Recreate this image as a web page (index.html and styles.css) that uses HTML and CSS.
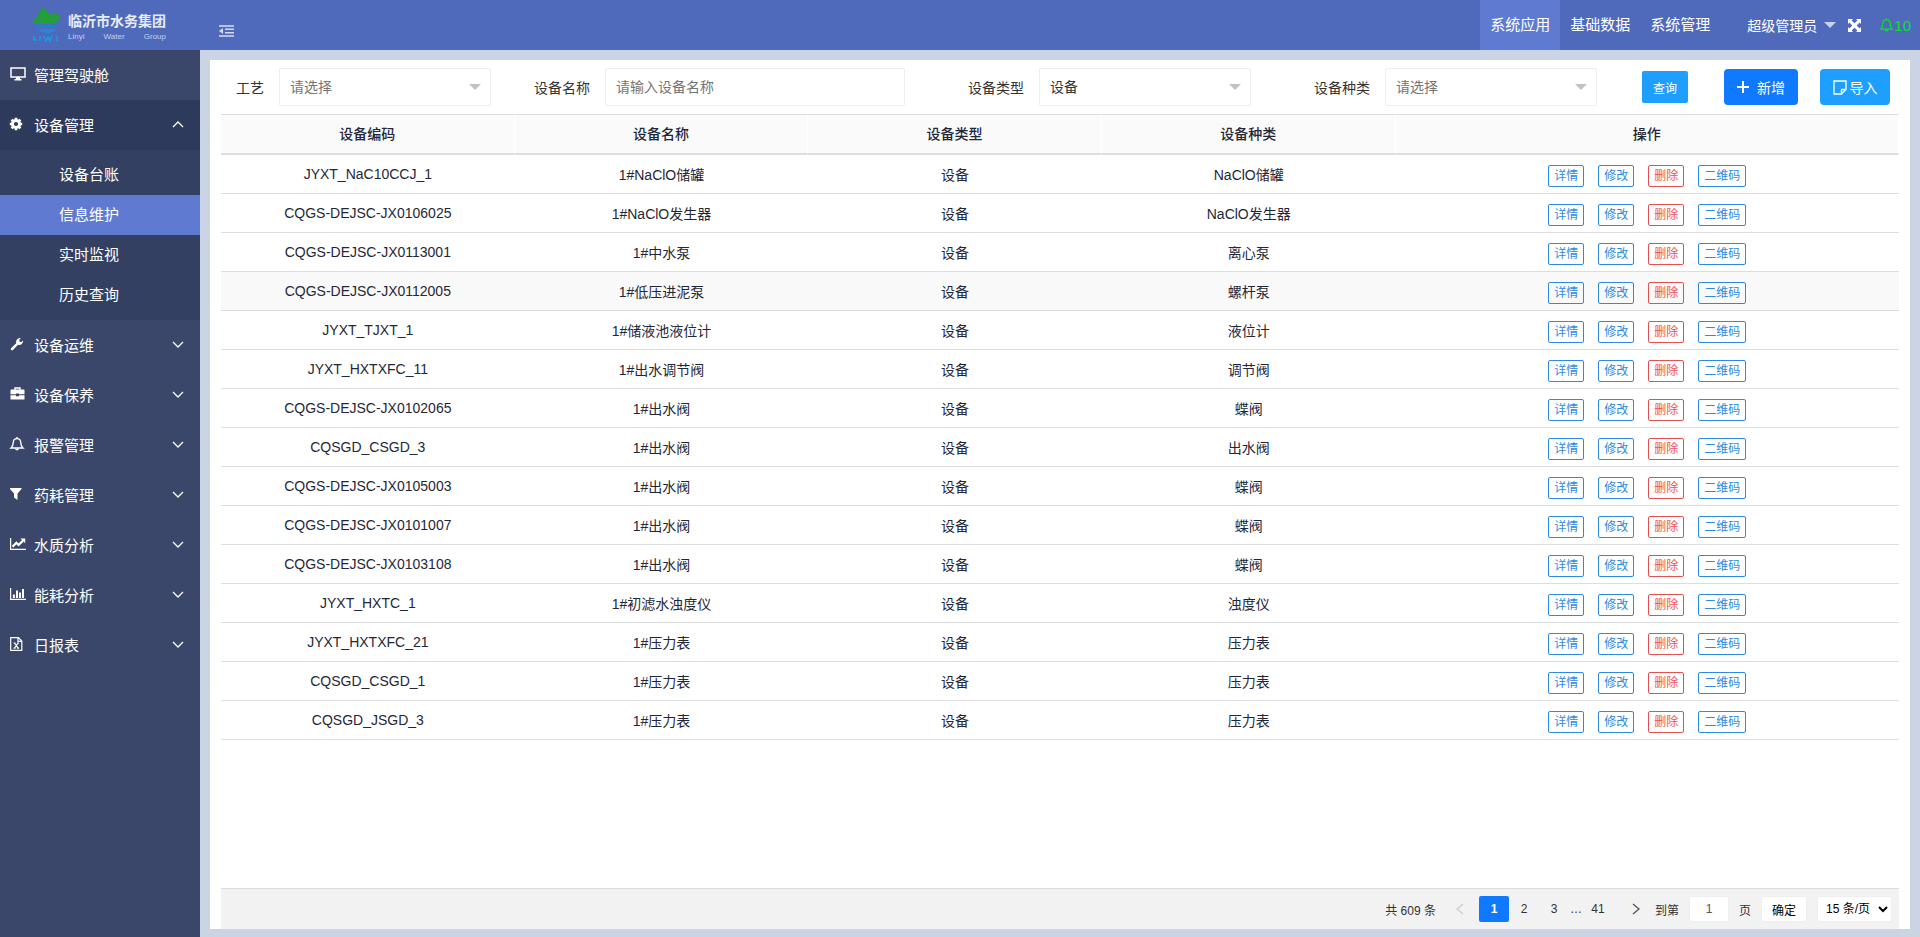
FILE: index.html
```
<!DOCTYPE html>
<html lang="zh-CN">
<head>
    <meta charset="UTF-8">
    <meta name="viewport" content="width=device-width, initial-scale=1.0">
    <title>信息维护</title>
    <link rel="stylesheet" href="styles.css">
</head>
<body>
    <header class="header">
        <div class="logo">
            <svg class="logo-mark" viewBox="0 0 30 36" aria-hidden="true">
                <path d="M1 17 L2 12 L5 10 L9 2 L12 1 L19 8 L23 6 L27 8 L28 12 L24 16 L18 17 Z" fill="#21a038"/>
                <path d="M6 16 L11 11 L16 16 M12 8 L19 15 L23 11" stroke="#3a8f6a" stroke-width="1" fill="none"/>
                <path d="M3 18 H27 L25 21 H5 Z" fill="#1c83d0"/>
                <path d="M7 22 H24 C21 26 18 26 15 26 C12 26 9 25 7 22 Z" fill="#2b86d4"/>
                <path d="M2 29 V33 H5 M8 29 V34 M12 29 L14 34 L16 30 L18 34 L20 29 M25 29 V34" stroke="#12a0e0" stroke-width="1.4" fill="none"/>
            </svg>
            <div class="logo-text">
                <strong>临沂市水务集团</strong>
                <div class="logo-en"><span>Linyi</span><span>Water</span><span>Group</span></div>
            </div>
        </div>
        <button class="fold" aria-label="收起菜单">
            <svg width="15" height="12" viewBox="0 0 15 12"><path d="M0 1H15M6 4.3H15M6 7.7H15M0 11H15" stroke="currentColor" stroke-width="1.6"/><path d="M0 6L4 3V9Z" fill="currentColor"/></svg>
        </button>
        <nav class="top-nav">
            <a href="#" class="active">系统应用</a>
            <a href="#">基础数据</a>
            <a href="#">系统管理</a>
        </nav>
        <div class="user">
            <a href="#" class="user-name">超级管理员
                <svg width="12" height="6" viewBox="0 0 12 6"><path d="M0 0H12L6 6Z" fill="#c8d1ee"/></svg>
            </a>
            <button class="full" aria-label="全屏">
                <svg width="13" height="13" viewBox="0 0 13 13"><path d="M0 0H5L3.6 1.4L6.5 4.3L9.4 1.4L8 0H13V5L11.6 3.6L8.7 6.5L11.6 9.4L13 8V13H8L9.4 11.6L6.5 8.7L3.6 11.6L5 13H0V8L1.4 9.4L4.3 6.5L1.4 3.6L0 5Z" fill="#fff"/></svg>
            </button>
            <a href="#" class="notice">
                <svg width="13" height="14" viewBox="0 0 13 14" fill="none" stroke="currentColor" stroke-width="1.2"><path d="M.8 11.2H12.2C10.6 9.8 10.4 8.3 10.3 5.8C10.2 3.2 8.8 1.7 6.5 1.7S2.8 3.2 2.7 5.8C2.6 8.3 2.4 9.8 .8 11.2ZM5 11.6C5.2 13.4 7.8 13.4 8 11.6M6.5 .3V1.7"/></svg>10</a>
        </div>
    </header>

    <div class="main">
        <aside class="side">
            <a href="#" class="menu">
                <svg viewBox="0 0 16 14"><path d="M1 1H15V10H1Z" fill="none" stroke="#fff" stroke-width="1.5"/><path d="M6 10H10V12H11.5V13.5H4.5V12H6Z" fill="#fff"/></svg>
                <span>管理驾驶舱</span>
            </a>
            <a href="#" class="menu open">
                <svg viewBox="0 0 16 14"><circle cx="6" cy="7" r="3.6" fill="none" stroke="#fff" stroke-width="3"/><path d="M6 .8V3M6 11V13.2M-.2 7H2M10 7H12.2M1.6 2.6L3 4M9 10L10.4 11.4M10.4 2.6L9 4M3 10L1.6 11.4" stroke="#fff" stroke-width="2.6"/></svg>
                <span>设备管理</span>
                <svg class="arrow" viewBox="0 0 12 7"><path d="M1 6L6 1L11 6" fill="none" stroke="#fff" stroke-width="1.3"/></svg>
            </a>
            <nav class="sub">
                <a href="#">设备台账</a>
                <a href="#" class="active">信息维护</a>
                <a href="#">实时监视</a>
                <a href="#">历史查询</a>
            </nav>
            <a href="#" class="menu">
                <svg viewBox="0 0 16 14"><path d="M1 11.2L6.2 6.2C5.6 3.2 7.6 .8 10.8 1L9.2 3L9.6 4.7L11.3 5L13 3.4C13.3 6.4 10.8 8.4 8 7.8L3 13C1.6 13.8 .2 12.6 1 11.2Z" fill="#fff"/></svg>
                <span>设备运维</span>
                <svg class="arrow" viewBox="0 0 12 7"><path d="M1 1L6 6L11 1" fill="none" stroke="#fff" stroke-width="1.3"/></svg>
            </a>
            <a href="#" class="menu">
                <svg viewBox="0 0 16 14"><path d="M5 3V1H10V3" fill="none" stroke="#fff" stroke-width="1.4"/><path d="M1 2.6H14L14.5 3.2V7.2H9V6.4H6V7.2H.5V3.2ZM.5 8.2H6V9.2H9V8.2H14.5V12.6H.5Z" fill="#fff"/></svg>
                <span>设备保养</span>
                <svg class="arrow" viewBox="0 0 12 7"><path d="M1 1L6 6L11 1" fill="none" stroke="#fff" stroke-width="1.3"/></svg>
            </a>
            <a href="#" class="menu">
                <svg viewBox="0 0 16 14"><path d="M1 11H13C11 9.4 10.8 7.6 10.7 5.4C10.6 3 9.2 1.6 7 1.6S3.4 3 3.3 5.4C3.2 7.6 3 9.4 1 11Z" fill="none" stroke="#fff" stroke-width="1.3"/><path d="M5 11.6H9C8.6 14.2 5.4 14.2 5 11.6ZM6.3 0H7.7V1.6H6.3Z" fill="#fff"/></svg>
                <span>报警管理</span>
                <svg class="arrow" viewBox="0 0 12 7"><path d="M1 1L6 6L11 1" fill="none" stroke="#fff" stroke-width="1.3"/></svg>
            </a>
            <a href="#" class="menu">
                <svg viewBox="0 0 16 14"><path d="M0 1H11.5V2L7.5 6.5V13L4 10.5V6.5L0 2Z" fill="#fff"/></svg>
                <span>药耗管理</span>
                <svg class="arrow" viewBox="0 0 12 7"><path d="M1 1L6 6L11 1" fill="none" stroke="#fff" stroke-width="1.3"/></svg>
            </a>
            <a href="#" class="menu">
                <svg viewBox="0 0 16 14"><path d="M.6 1V12.4H16" fill="none" stroke="#fff" stroke-width="1.2"/><path d="M2.5 9.8L6.4 5.8L8.6 8L13 3.6" fill="none" stroke="#fff" stroke-width="2.2"/><path d="M10.4 1.4H15.2V6.2Z" fill="#fff"/></svg>
                <span>水质分析</span>
                <svg class="arrow" viewBox="0 0 12 7"><path d="M1 1L6 6L11 1" fill="none" stroke="#fff" stroke-width="1.3"/></svg>
            </a>
            <a href="#" class="menu">
                <svg viewBox="0 0 16 14"><path d="M.6 1V12.4H16" fill="none" stroke="#fff" stroke-width="1.2"/><path d="M3.9 11V7.5M7 11V3.5M10 11V5.5M13 11V2" stroke="#fff" stroke-width="2"/></svg>
                <span>能耗分析</span>
                <svg class="arrow" viewBox="0 0 12 7"><path d="M1 1L6 6L11 1" fill="none" stroke="#fff" stroke-width="1.3"/></svg>
            </a>
            <a href="#" class="menu">
                <svg viewBox="0 0 16 14"><path d="M.7 .6H8.4L11.8 4V13.4H.7ZM8 .6V4.4H11.8" fill="none" stroke="#fff" stroke-width="1.2"/><path d="M3.6 6H5.6M7 6H9M3.6 11.2H5.6M7 11.2H9M4.4 6L8.2 11.2M8.2 6L4.4 11.2" stroke="#fff" stroke-width="1.2"/></svg>
                <span>日报表</span>
                <svg class="arrow" viewBox="0 0 12 7"><path d="M1 1L6 6L11 1" fill="none" stroke="#fff" stroke-width="1.3"/></svg>
            </a>
        </aside>

        <main class="card">
            <form class="search" action="#">
                <div class="item craft">
                    <label for="craft">工艺</label>
                    <div class="select-box"><select id="craft" class="empty"><option>请选择</option></select></div>
                </div>
                <div class="item">
                    <label for="name">设备名称</label>
                    <input type="text" id="name" placeholder="请输入设备名称">
                </div>
                <div class="item">
                    <label for="type">设备类型</label>
                    <div class="select-box"><select id="type"><option>设备</option></select></div>
                </div>
                <div class="item">
                    <label for="kind">设备种类</label>
                    <div class="select-box"><select id="kind" class="empty"><option>请选择</option></select></div>
                </div>
                <div class="btns">
                    <button type="button" class="query">查询</button>
                    <button type="button" class="add"><svg width="12" height="12" viewBox="0 0 12 12"><path d="M6 0V12M0 6H12" stroke="#fff" stroke-width="2"/></svg>新增</button>
                    <button type="button" class="import"><svg width="14" height="15" viewBox="0 0 14 15"><path d="M8 14H1V1H13V9.5L8.5 14V9.5H13" fill="none" stroke="#fff" stroke-width="1.3"/></svg>导入</button>
                </div>
            </form>

            <table class="list">
                <thead>
                    <tr><th>设备编码</th><th>设备名称</th><th>设备类型</th><th>设备种类</th><th class="op">操作</th></tr>
                </thead>
                <tbody id="rows"></tbody>
            </table>

            <div class="page">
                <span class="total">共 609 条</span>
                <button class="turn" aria-label="上一页" disabled><svg width="8" height="12" viewBox="0 0 8 12"><path d="M7 1L1 6L7 11" fill="none" stroke="currentColor" stroke-width="1.3"/></svg></button>
                <a href="#" class="num active">1</a>
                <a href="#" class="num">2</a>
                <a href="#" class="num">3</a>
                <span class="more">…</span>
                <a href="#" class="num">41</a>
                <button class="turn next" aria-label="下一页"><svg width="8" height="12" viewBox="0 0 8 12"><path d="M1 1L7 6L1 11" fill="none" stroke="currentColor" stroke-width="1.3"/></svg></button>
                <label for="go">到第</label>
                <input type="text" id="go" value="1">
                <span>页</span>
                <button class="ok">确定</button>
                <select class="limit" aria-label="每页条数"><option>15 条/页</option></select>
            </div>
        </main>
    </div>
    <script>
        // 编码, 名称, 种类
        const data = [
            ["JYXT_NaC10CCJ_1", "1#NaClO储罐", "NaClO储罐"],
            ["CQGS-DEJSC-JX0106025", "1#NaClO发生器", "NaClO发生器"],
            ["CQGS-DEJSC-JX0113001", "1#中水泵", "离心泵"],
            ["CQGS-DEJSC-JX0112005", "1#低压进泥泵", "螺杆泵"],
            ["JYXT_TJXT_1", "1#储液池液位计", "液位计"],
            ["JYXT_HXTXFC_11", "1#出水调节阀", "调节阀"],
            ["CQGS-DEJSC-JX0102065", "1#出水阀", "蝶阀"],
            ["CQSGD_CSGD_3", "1#出水阀", "出水阀"],
            ["CQGS-DEJSC-JX0105003", "1#出水阀", "蝶阀"],
            ["CQGS-DEJSC-JX0101007", "1#出水阀", "蝶阀"],
            ["CQGS-DEJSC-JX0103108", "1#出水阀", "蝶阀"],
            ["JYXT_HXTC_1", "1#初滤水浊度仪", "浊度仪"],
            ["JYXT_HXTXFC_21", "1#压力表", "压力表"],
            ["CQSGD_CSGD_1", "1#压力表", "压力表"],
            ["CQSGD_JSGD_3", "1#压力表", "压力表"]
        ];
        const current = 3;
        let html = "";
        for(let i = 0; i<data.length; i++){
            html += `<tr${i === current ? ' class="hover"' : ''}>
                <td>${data[i][0]}</td><td>${data[i][1]}</td><td>设备</td><td>${data[i][2]}</td>
                <td><div class="ops"><button>详情</button><button>修改</button><button class="del">删除</button><button>二维码</button></div></td>
            </tr>`;
        }
        document.querySelector('#rows').innerHTML = html;
    </script>
</body>
</html>
```
FILE: styles.css
```
* {
    box-sizing: border-box;
    margin: 0;
    padding: 0;
}
body {
    display: flex;
    flex-direction: column;
    min-height: 100vh;
    font-family: "Liberation Sans", "Noto Sans CJK SC", sans-serif;
    font-size: 14px;
    color: #333;
    background-color: #cbd4e5;
}
a {
    color: inherit;
    text-decoration: none;
}
button, input, select {
    font-family: inherit;
    font-size: 14px;
}
button {
    border: none;
    cursor: pointer;
}

/* 顶部 */
.header {
    display: flex;
    align-items: center;
    height: 50px;
    color: #fff;
    background-color: #4f6abb;
}
.logo {
    display: flex;
    align-items: center;
    width: 200px;
    padding-left: 32px;
}
.logo-mark {
    width: 30px;
    height: 36px;
    margin-right: 6px;
}
.logo-text {
    width: 98px;
    padding-top: 4px;
}
.logo-text strong {
    display: block;
    font-size: 14px;
    line-height: 20px;
    white-space: nowrap;
    color: #e6ecfa;
}
.logo-en {
    display: flex;
    justify-content: space-between;
    font-size: 8px;
    line-height: 12px;
    color: #c3cff0;
}
.fold {
    height: 12px;
    margin-left: 19px;
    margin-top: 12px;
    color: #d5dcf2;
    background: none;
}
.fold svg {
    display: block;
}
.top-nav {
    display: flex;
    margin-left: auto;
    font-size: 15px;
    line-height: 50px;
}
.top-nav a {
    padding: 0 10px;
}
.top-nav .active {
    background-color: #5f7bd1;
}
.user {
    display: flex;
    align-items: center;
    padding: 0 9px 0 27px;
}
.user-name {
    display: flex;
    align-items: center;
    gap: 7px;
}
.full {
    height: 13px;
    margin: 0 19px 0 12px;
    background: none;
}
.full svg {
    display: block;
}
.notice {
    display: flex;
    align-items: center;
    gap: 1px;
    font-size: 15px;
    color: #0be02f;
}

.main {
    display: flex;
    flex: 1;
}

/* 左侧菜单 */
.side {
    flex: none;
    width: 200px;
    font-size: 15px;
    color: #fff;
    background-color: #3b476a;
}
.menu {
    display: flex;
    align-items: center;
    height: 50px;
    padding: 0 16px 2px 10px;
}
.menu svg {
    width: 16px;
    height: 14px;
    margin-right: 8px;
    overflow: visible;
}
.menu .arrow {
    width: 12px;
    height: 7px;
    margin: 0 0 0 auto;
}
.menu.open {
    background-color: #2e3a5c;
}
.sub {
    padding: 5px 0;
    background-color: #344062;
}
.sub a {
    display: block;
    padding-left: 59px;
    line-height: 40px;
}
.sub .active {
    background-color: #5f7bd1;
}

/* 查询条件 */
.card {
    display: flex;
    flex: 1;
    flex-direction: column;
    margin: 10px 10px 8px;
    padding: 8px 11px 0;
    background-color: #fff;
}
.search {
    display: flex;
    align-items: center;
    margin-bottom: 8px;
}
.item {
    display: flex;
    align-items: center;
    margin-right: 48px;
}
.item.craft {
    margin-right: 28px;
}
.item label {
    padding: 0 15px;
    white-space: nowrap;
}
.item input, .item select {
    width: 212px;
    height: 38px;
    padding: 0 10px;
    border: 1px solid #eee;
    border-radius: 2px;
    color: #333;
    background-color: #fff;
}
.item input {
    width: 300px;
}
.item select {
    appearance: none;
}
.item input::placeholder, .item .empty {
    color: #757575;
}
.select-box {
    position: relative;
}
.select-box::after {
    content: "";
    position: absolute;
    top: 16px;
    right: 10px;
    border: 6px solid transparent;
    border-top-color: #c2c2c2;
    pointer-events: none;
}
.btns {
    display: flex;
    flex: none;
    align-items: center;
    margin-left: auto;
    padding-right: 9px;
}
.btns button {
    display: flex;
    align-items: center;
    justify-content: center;
    width: 70px;
    height: 36px;
    border-radius: 4px;
    color: #fff;
    background-color: #1e9fff;
}
.btns .query {
    width: 46px;
    height: 32px;
    margin-right: 36px;
    border-radius: 2px;
    font-size: 12px;
}
.btns .add {
    gap: 8px;
    width: 74px;
    margin-right: 22px;
    background-color: #0f7aff;
}
.btns .import {
    gap: 3px;
}
.search .item:nth-child(4) {
    margin-right: 0;
}

/* 列表 */
.list {
    width: 100%;
    table-layout: fixed;
    border-collapse: separate;
    border-spacing: 0;
    text-align: center;
    color: #1f2738;
}
.list th {
    height: 41px;
    padding-bottom: 2px;
    border-top: 1px solid #dcdde0;
    border-bottom: 2px solid #dcdde0;
    border-right: 1px solid #fff;
    font-weight: 500;
    background-color: #fafafb;
}
.list .op {
    width: 30%;
}
.list td {
    height: 39px;
    border-bottom: 1px solid #dcdde0;
}
.list .hover {
    background-color: #f9f9f9;
}
.ops {
    display: flex;
    justify-content: center;
    gap: 14px;
    padding-top: 4px;
}
.ops button {
    height: 22px;
    padding: 0 5px;
    border: 1px solid #2d8ae0;
    border-radius: 2px;
    font-size: 12px;
    line-height: 20px;
    color: #2d8ae0;
    background: none;
}
.ops .del {
    border-color: #e25050;
    color: #f05050;
}

/* 分页 */
.page {
    display: flex;
    align-items: center;
    justify-content: flex-end;
    height: 41px;
    margin-top: auto;
    padding-right: 7px;
    border-top: 1px solid #dcdde0;
    font-size: 12px;
    color: #333;
    background-color: #f2f2f2;
}
.page button, .page input, .page select {
    font-size: 12px;
}
.turn {
    width: 30px;
    height: 26px;
    margin: 0 4px 0 9px;
    color: #555;
    background: none;
}
.turn:disabled {
    color: #ccc;
}
.turn svg {
    display: block;
    margin: 0 auto;
}
.next {
    margin: 0 4px 0 8px;
}
.num {
    width: 30px;
    border-radius: 2px;
    line-height: 26px;
    text-align: center;
}
.num.active {
    font-weight: bold;
    color: #fff;
    background-color: #0f7aff;
}
.more {
    width: 14px;
    text-align: center;
}
.page input {
    width: 40px;
    height: 26px;
    margin: 0 10px;
    border: 1px solid #eee;
    border-radius: 2px;
    text-align: center;
    color: #555;
}
.ok {
    width: 46px;
    height: 26px;
    margin: 0 10px;
    border: 1px solid #eee;
    border-radius: 2px;
    background-color: #fff;
}
.limit {
    width: 75px;
    height: 26px;
    padding: 0 4px;
    border: 1px solid #eee;
    border-radius: 2px;
    background-color: #fff;
}
```
